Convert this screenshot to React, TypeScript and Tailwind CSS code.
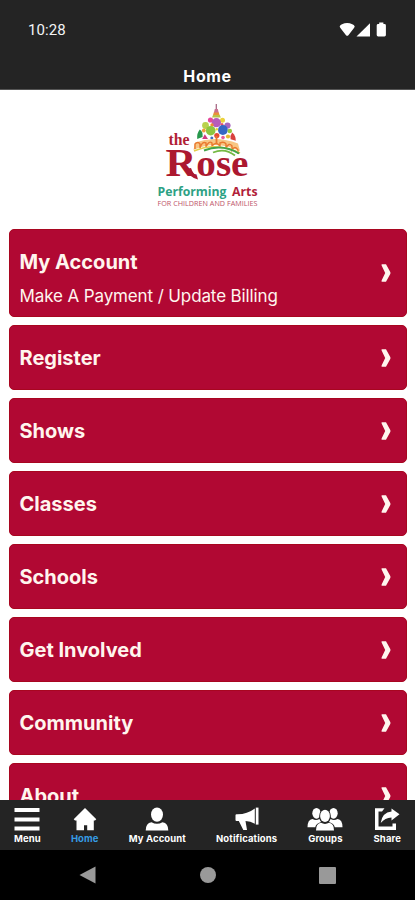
import type { ReactNode } from "react";

const links = [
  { title: "My Account", subtitle: "Make A Payment / Update Billing" },
  { title: "Register" },
  { title: "Shows" },
  { title: "Classes" },
  { title: "Schools" },
  { title: "Get Involved" },
  { title: "Community" },
  { title: "About" },
];

function StatusBar() {
  return (
    <div className="flex h-[60px] items-center justify-between pl-7 pr-[28px]">
      <span className="font-[Roboto,sans-serif] text-[15px] leading-5 tracking-[0.1px] text-gray-100">
        10:28
      </span>
      <svg width="48" height="16" viewBox="0 0 48 16" fill="#fff">
        <path d="M0.7 4.2Q1.5 3 3 2.3Q8.2 -0.2 13.3 2.3Q15 3 15.7 4.2Q15.6 5.4 14.8 6.3L9.4 13.2Q8.2 14.4 7 13.2L1.6 6.3Q0.8 5.4 0.7 4.2Z" />
        <path d="M31 1.2V14.5H17.5Z" />
        <path d="M40.2 0.5h4.2v1.5h1.1q1.4 0 1.4 1.4v9.7q0 1.4-1.4 1.4h-6.4q-1.4 0-1.4-1.4V3.4q0-1.4 1.4-1.4h1.1z" />
      </svg>
    </div>
  );
}

function Logo() {
  return (
    <svg width="104" height="112" viewBox="0 0 104 112" aria-label="the Rose">
      {/* dome */}
      <path d="M60.3 6v6" stroke="#a86a86" strokeWidth="1.3" />
      <path d="M58.8 11h3l1 4h-5z" fill="#c8708f" />
      <path d="M57.8 14.6h5l.8 2.4h-6.6z" fill="#e9913a" />
      <path d="M57 17h6.8l1 2.4h-8.8z" fill="#b9c24a" />
      <circle cx="54.5" cy="22" r="2.6" fill="#e5489a" />
      <circle cx="66.5" cy="22.3" r="2.5" fill="#ecd23b" />
      <circle cx="60.4" cy="24.7" r="4.6" fill="#b65cba" />
      <circle cx="49.5" cy="27.5" r="3.4" fill="#b9d24d" />
      <circle cx="56" cy="27" r="1.7" fill="#ef8c32" />
      <circle cx="71.5" cy="27.5" r="3.1" fill="#a666c0" />
      <circle cx="66" cy="26.5" r="1.5" fill="#e1536b" />
      <circle cx="54.7" cy="32.7" r="4.8" fill="#8dc63f" />
      <circle cx="66.9" cy="32" r="4.9" fill="#3567c4" />
      <circle cx="47.8" cy="32.5" r="1.9" fill="#f0a03b" />
      <circle cx="60.8" cy="31.2" r="1.3" fill="#e9d43a" />
      <circle cx="73.8" cy="33" r="2.3" fill="#96c83e" />
      <path d="M43.8 31.5q3.5 2 2.8 7.5l-5.4 2q-.5-6 2.6-9.5z" fill="#27984c" />
      <path d="M48.8 36.2l3.2 4.8h-5.8z" fill="#d0387e" />
      <circle cx="60.8" cy="37.6" r="2.6" fill="#e34b35" />
      <circle cx="55.8" cy="40" r="1.5" fill="#3e6fc0" />
      <circle cx="67" cy="39.6" r="1.8" fill="#e75b9a" />
      <circle cx="72" cy="38.5" r="2.1" fill="#e8b931" />
      <path d="M76.2 34.5q3.8 3.5 3.6 8.2l-5.2-1.5q-.6-4 1.6-6.7z" fill="#d8403c" />
      {/* arches */}
      <path d="M39 44.5Q60 36.8 82 45.5L84 53Q60 41.5 37.5 52Z" fill="#f8c684" />
      <path
        d="M39 51v-5q3-3 5 0v4q2-7 6-5v4q3-7 6-4v3q4-5 8 0v-3q4-2 6 1v4q3-6 6-2v4q3-5 6 0v4"
        fill="none"
        stroke="#e9792f"
        strokeWidth="1.4"
      />
      <path d="M60.5 38v8" stroke="#e9792f" strokeWidth="1.8" />
      <path d="M38 53Q60 43.5 84 55" fill="none" stroke="#e3ce4b" strokeWidth="1.5" />
      <path d="M48 52.5Q66 45.5 83 55.5" fill="none" stroke="#45a449" strokeWidth="2" />
      <path d="M57 54.5Q69 49.5 79 57.5" fill="none" stroke="#75b944" strokeWidth="1.8" />
      {/* wordmark */}
      <text x="12.5" y="47" textLength="21" lengthAdjust="spacingAndGlyphs" fill="#b01e35" fontSize="16" fontWeight="700" fontFamily="Liberation Serif, serif">
        the
      </text>
      <text x="9.5" y="78.2" textLength="83" lengthAdjust="spacingAndGlyphs" fill="#ac1830" fontSize="37.5" fontWeight="700" fontFamily="Liberation Serif, serif">
        <tspan fontSize="41">R</tspan>ose
      </text>
      <path d="M30 71Q34 80 42 81.5L41 78Q37 76 35 70Z" fill="#ac1830" />
      <text x="1.5" y="98" textLength="69" lengthAdjust="spacingAndGlyphs" fill="#2da184" fontSize="12" fontWeight="700" fontFamily="Open Sans, sans-serif">
        Performing
      </text>
      <text x="76" y="98" textLength="25.5" lengthAdjust="spacingAndGlyphs" fill="#b21f3b" fontSize="12" fontWeight="700" fontFamily="Open Sans, sans-serif">
        Arts
      </text>
      <text x="1.5" y="107.6" textLength="100" lengthAdjust="spacingAndGlyphs" fill="#bd5368" fontSize="6.6" fontFamily="Open Sans, sans-serif">
        FOR CHILDREN AND FAMILIES
      </text>
    </svg>
  );
}

function LinkCard({ title, subtitle }: { title: string; subtitle?: string }) {
  return (
    <div
      className={`flex shrink-0 items-center justify-between rounded-[5px] border border-[#a80620] bg-[#b10833] pl-[9.5px] pr-[15px] text-[#fff5ee] ${
        subtitle ? "h-[88px]" : "h-[65px]"
      }`}
    >
      <div className={subtitle ? "pt-[10px]" : ""}>
        <h2 className="text-[20px] font-bold leading-[26px]">{title}</h2>
        {subtitle && <p className="mt-[9px] text-[17px] leading-6 tracking-[-0.12px]">{subtitle}</p>}
      </div>
      <svg width="10" height="18" viewBox="0 0 10 18" fill="currentColor">
        <path d="M0.6 0.2H5L9.4 8.2V9.8L5 17.8H0.6V16.5L4.2 9L0.6 1.5Z" />
      </svg>
    </div>
  );
}

function Tab({ label, active, children }: { label: string; active?: boolean; children: ReactNode }) {
  return (
    <div className="flex flex-col items-center">
      <div className="flex h-6 items-center">{children}</div>
      <span
        className={`mt-[2px] whitespace-nowrap text-[9.5px] font-bold leading-3 tracking-[0.1px] ${
          active ? "text-[#369ce5]" : "text-white"
        }`}
      >
        {label}
      </span>
    </div>
  );
}

function TabBar() {
  return (
    <nav className="flex h-[50px] shrink-0 justify-between bg-[#242424] px-[14px] pt-[7px]">
      <Tab label="Menu">
        <svg width="26" height="24" viewBox="0 0 26 24" fill="#fff">
          <path d="M0.5 1h25v4h-25zM0.5 10.4h25v4h-25zM0.5 19.6h25v4h-25z" />
        </svg>
      </Tab>
      <Tab label="Home" active>
        <svg width="24" height="24" viewBox="0 0 24 24" fill="#fff">
          <path d="M12 1L23.3 12.3L22 13.6H20.8V23.2H14.2V18.3H11V23.2H3.5V13.6H2L0.7 12.3Z" />
        </svg>
      </Tab>
      <Tab label="My Account">
        <svg width="24" height="24" viewBox="0 0 24 24" fill="#fff">
          <ellipse cx="12" cy="7.6" rx="6" ry="7.2" />
          <path d="M0.7 23.5Q0.7 16 6.5 15.2Q12 18.5 17.5 15.2Q23.3 16 23.3 23.5Z" />
        </svg>
      </Tab>
      <Tab label="Notifications">
        <svg width="24" height="24" viewBox="0 0 24 24" fill="#fff">
          <path d="M0.5 8.2Q0.5 7.2 1.5 7.2Q12 7.5 19.8 1.4V16.8Q15.5 14.3 10.5 14L12 23H8.3L3.8 14H1.5Q0.5 14 0.5 13Z" />
          <path d="M20.8 0.6h2.7v17h-2.7z" />
        </svg>
      </Tab>
      <Tab label="Groups">
        <svg width="36" height="24" viewBox="0 0 36 24" fill="#fff">
          <ellipse cx="9.5" cy="6.3" rx="4.2" ry="5.4" />
          <ellipse cx="26.5" cy="6.3" rx="4.2" ry="5.4" />
          <path d="M0.5 20.3Q0.5 12.5 5.5 12Q9 14 12.5 12L14 15Q9 16.5 8.2 20.3ZM35.5 20.3Q35.5 12.5 30.5 12Q27 14 23.5 12L22 15Q27 16.5 27.8 20.3Z" />
          <ellipse cx="18" cy="8.9" rx="5.8" ry="7" fill="#242424" />
          <ellipse cx="18" cy="8.9" rx="4.9" ry="6.1" />
          <path d="M9 23.5Q9 16.3 14 15.8Q18 18 22 15.8Q27 16.3 27 23.5Z" />
        </svg>
      </Tab>
      <Tab label="Share">
        <svg width="26" height="24" viewBox="0 0 26 24" fill="#fff">
          <path d="M10.5 1.2H1V23H22V16.5H18.5V19.5H4.5V4.5H8Z" />
          <path d="M17.5 1.5L25.5 7.3L17.5 13.5V10.4Q11 10.7 6.7 16Q8.2 5.5 17.5 4.6Z" />
        </svg>
      </Tab>
    </nav>
  );
}

function SystemNav() {
  return (
    <div className="flex h-[50px] shrink-0 items-center justify-between bg-black px-[79px] text-[#999]">
      <svg width="17" height="18" viewBox="0 0 17 18" fill="currentColor">
        <path d="M16.5 0.5v17L0.5 9z" />
      </svg>
      <div className="size-4 rounded-full bg-[#999]" />
      <div className="size-[17px] rounded-[1px] bg-[#999]" />
    </div>
  );
}

export default function App() {
  return (
    <div className="flex h-[900px] w-[415px] flex-col overflow-hidden bg-white font-[Inter,sans-serif]">
      <header className="h-[90px] shrink-0 border-b border-[#555] bg-[#242424]">
        <StatusBar />
        <h1 className="pt-1 text-center text-[16px] font-bold leading-6 tracking-[0.6px] text-white">Home</h1>
      </header>
      <main className="flex min-h-0 flex-1 flex-col overflow-hidden">
        <div className="flex h-[139px] shrink-0 justify-center pt-[8px]">
          <Logo />
        </div>
        <div className="flex flex-col gap-2 pl-[9px] pr-2">
          {links.map((link) => (
            <LinkCard key={link.title} {...link} />
          ))}
        </div>
      </main>
      <TabBar />
      <SystemNav />
    </div>
  );
}
